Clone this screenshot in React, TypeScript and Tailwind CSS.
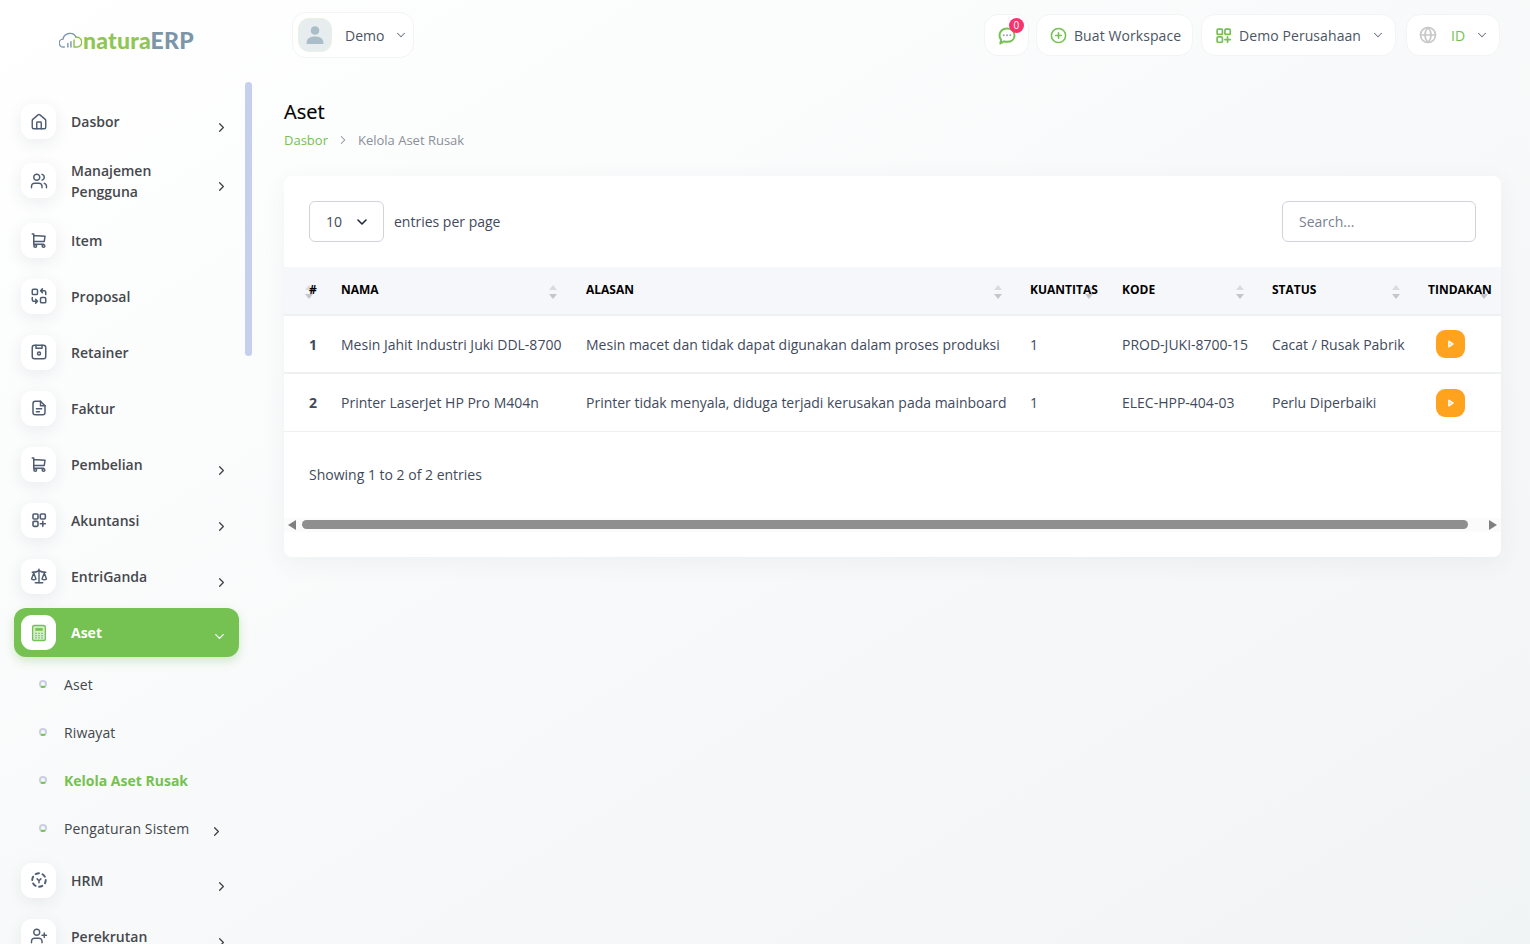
import React from 'react';
import { ChevronDown, ChevronRight, Home, Users, UserPlus, Scale, Globe } from 'lucide-react';

const Ic: React.FC<{ children: React.ReactNode; className?: string }> = ({ children, className }) => (
  <svg viewBox="0 0 24 24" fill="none" stroke="currentColor" strokeWidth={2} strokeLinecap="round" strokeLinejoin="round" className={className ?? 'w-[18px] h-[18px]'}>
    {children}
  </svg>
);

const CartIcon = () => (
  <Ic>
    <circle cx="7" cy="20" r="1.8" />
    <circle cx="18" cy="20" r="1.8" />
    <path d="M5 18V4H3M5 6l15 1-1 7H5M5 17.5h13" />
  </Ic>
);
const SwapIcon = () => (
  <Ic>
    <rect x="3" y="3" width="7" height="7" rx="1.5" />
    <rect x="14" y="14" width="7" height="7" rx="1.5" />
    <path d="M21 10V7a2 2 0 0 0-2-2h-5M16.5 2.5 14 5l2.5 2.5M3 14v3a2 2 0 0 0 2 2h5M7.5 16.5 10 19l-2.500 2.500" />
  </Ic>
);
const SaveIcon = () => (
  <Ic>
    <path d="M6 3h12a3 3 0 0 1 3 3v12a3 3 0 0 1-3 3H6a3 3 0 0 1-3-3V6a3 3 0 0 1 3-3Z" />
    <path d="M8 3v4h8V3" />
    <circle cx="12" cy="14" r="2" />
  </Ic>
);
const FileIcon = () => (
  <Ic>
    <path d="M14 3H7a3 3 0 0 0-3 3v12a3 3 0 0 0 3 3h10a3 3 0 0 0 3-3V9Z" />
    <path d="M14 3v6h6M8.500 13h7M8.500 17h4" />
  </Ic>
);
const GridPlusIcon: React.FC<{ className?: string; strokeWidth?: number }> = ({ className, strokeWidth }) => (
  <Ic className={className}>
    <g strokeWidth={strokeWidth ?? 2}>
      <rect x="3" y="3" width="7.500" height="7.500" rx="1.500" />
      <rect x="14" y="3" width="7.500" height="7.500" rx="1.500" />
      <rect x="3" y="14" width="7.500" height="7.500" rx="1.500" />
      <path d="M17.700 14v7.500M14 17.700h7.500" />
    </g>
  </Ic>
);
const DashedIcon = () => (
  <Ic>
    <circle cx="12" cy="12" r="9" strokeDasharray="4.500 4.900" strokeWidth={2.600} />
    <path d="M9.500 10.500 12 13l2.500-2.500M12 13v2.500" />
  </Ic>
);
const CalcIcon = () => (
  <svg viewBox="0 0 24 24" className="w-[18px] h-[18px]" fill="none" stroke="#75c151" strokeWidth={1.800}>
    <rect x="3.500" y="2" width="17" height="20" rx="2.500" fill="#d6edcb" />
    <rect x="7" y="5.500" width="10" height="3.500" fill="#75c151" stroke="none" />
    <path d="M7 12.500h2M11 12.500h2M15 12.500h2M7 15.500h2M11 15.500h2M15 15.500h2M7 18.500h2M11 18.500h2M15 18.500h2" strokeWidth={1.600} />
  </svg>
);

const SortArrows: React.FC<{ right: string }> = ({ right }) => (
  <span className={`absolute top-[18px] ${right} flex flex-col gap-[4px]`}>
    <span className="w-0 h-0 border-x-[4px] border-x-transparent border-b-[5px] border-b-[#d9dbdf]" />
    <span className="w-0 h-0 border-x-[4px] border-x-transparent border-t-[5px] border-t-[#c4c6cb]" />
  </span>
);

const Th: React.FC<{ label: string; right: string; first?: boolean }> = ({ label, right, first }) => (
  <th className={`relative h-[48px] p-0 pb-[2px] text-left text-[12px] font-bold text-black uppercase whitespace-nowrap ${first ? 'pl-[25px]' : 'pl-[12px]'}`}>
    <SortArrows right={right} />
    <span className="relative z-10">{label}</span>
  </th>
);

type NavItem = { label: React.ReactNode; icon: React.ReactNode; arrow?: boolean; rowClass?: string };

const navTop: NavItem[] = [
  { label: 'Dasbor', icon: <Home className="w-[18px] h-[18px] mt-[1px]" strokeWidth={1.900} />, arrow: true },
  { label: <>Manajemen<br />Pengguna</>, icon: <Users className="w-[18px] h-[18px]" strokeWidth={1.900} />, arrow: true, rowClass: 'h-[63px]' },
  { label: 'Item', icon: <CartIcon /> },
  { label: 'Proposal', icon: <SwapIcon /> },
  { label: 'Retainer', icon: <SaveIcon /> },
  { label: 'Faktur', icon: <FileIcon /> },
  { label: 'Pembelian', icon: <CartIcon />, arrow: true },
  { label: 'Akuntansi', icon: <GridPlusIcon className="w-[16px] h-[16px]" strokeWidth={2.400} />, arrow: true },
  { label: 'EntriGanda', icon: <Scale className="w-[18px] h-[18px]" strokeWidth={1.900} />, arrow: true },
];

const IconBox: React.FC<{ children: React.ReactNode }> = ({ children }) => (
  <span className="w-[35px] h-[35px] shrink-0 rounded-[11px] bg-white flex items-center justify-center text-[#4f5d73] shadow-[0_4px_16px_rgba(60,70,90,0.09)]">
    {children}
  </span>
);

const NavRow: React.FC<NavItem> = ({ label, icon, arrow, rowClass }) => (
  <div className={`flex items-center pl-[21px] pr-[24px] ${rowClass ?? 'h-[56px]'}`}>
    <IconBox>{icon}</IconBox>
    <span className="ml-[15px] flex-1 text-[14px] leading-[21px] font-semibold text-[#45484c]">{label}</span>
    {arrow && <ChevronRight className="w-[15px] h-[15px] mt-[12px] text-[#3f4246] -mr-[1px]" strokeWidth={2} />}
  </div>
);

const SubRow: React.FC<{ label: string; active?: boolean; arrow?: boolean }> = ({ label, active, arrow }) => (
  <div className="flex items-center h-[48px] pl-[39px] pr-[29px]">
    <span className="w-[8px] h-[8px] rounded-full border-2 border-[#c9cfe0] border-b-[#75c151]" />
    <span className={`ml-[17px] flex-1 text-[14px] ${active ? 'font-bold text-[#75c151]' : 'font-medium tracking-[0.12px] text-[#44474c]'}`}>{label}</span>
    {arrow && <ChevronRight className="w-[15px] h-[15px] mt-[6px] text-[#3f4246] -mr-[1px]" strokeWidth={2} />}
  </div>
);

const Sidebar = () => (
  <aside className="relative w-[284px] shrink-0 h-[944px] overflow-hidden">
    <div className="h-[93px] flex items-start pl-[59px] pt-[26px]">
      <svg viewBox="0 0 26 20" className="w-[23px] h-[18px] mt-[5px] mr-[1px]" fill="none" strokeWidth={1.600} strokeLinecap="round">
        <path d="M6 18H5a4.500 4.500 0 0 1-.5-9A8 8 0 0 1 19.500 7" stroke="#7c96a8" />
        <path d="M10 18v-4M13.500 18v-6" stroke="#7c96a8" />
        <path d="M19.500 7a5.500 5.500 0 0 1 1.500 11h-4V10" stroke="#8bc34a" />
      </svg>
      <span className="font-['Lato',sans-serif] text-[23px] leading-[28px] font-black tracking-[0.2px]">
        <span className="text-[#8fc655]">natura</span>
        <span className="text-[#7c96a8]">ERP</span>
      </span>
    </div>
    <nav className="w-[252px]">
      {navTop.map((n, i) => <NavRow key={i} {...n} />)}
      <div className="mx-[13px] ml-[14px] mt-[4px] h-[49px] rounded-[12px] bg-[#75c151] shadow-[0_4px_10px_rgba(117,193,81,0.3)] flex items-center pl-[7px] pr-[12px]">
        <span className="w-[35px] h-[35px] rounded-[11px] bg-white flex items-center justify-center"><CalcIcon /></span>
        <span className="ml-[15px] flex-1 text-[14px] font-bold text-white">Aset</span>
        <ChevronDown className="w-[15px] h-[15px] mt-[7px] text-white" strokeWidth={2} />
      </div>
      <div className="mt-[3px]">
        <SubRow label="Aset" />
        <SubRow label="Riwayat" />
        <SubRow label="Kelola Aset Rusak" active />
        <SubRow label="Pengaturan Sistem" arrow />
      </div>
      <NavRow label="HRM" icon={<DashedIcon />} arrow />
      <NavRow label="Perekrutan" icon={<UserPlus className="w-[18px] h-[18px]" strokeWidth={1.900} />} arrow />
    </nav>
    <div className="absolute left-[245px] top-[82px] w-[7px] h-[274px] rounded-full bg-[#c5cfee]" />
  </aside>
);

const Pill: React.FC<{ className: string; children: React.ReactNode }> = ({ className, children }) => (
  <div className={`h-[42px] rounded-[14px] bg-white border border-[#f3f4f5] flex items-center text-[14px] font-medium tracking-[0.08px] text-[#4b5563] ${className}`}>
    {children}
  </div>
);

const Header = () => (
  <header className="flex items-start justify-between pt-[12px] pl-[8px] pr-[30px] h-[94px]">
    <div className="w-[122px] h-[46px] rounded-[14px] bg-white border border-[#f3f4f5] flex items-center pl-[5px] text-[14px] font-medium text-[#4b5563]">
      <span className="w-[34px] h-[34px] rounded-[11px] bg-[#e7edee] border border-[#e6f3e0] flex items-center justify-center">
        <svg viewBox="0 0 24 24" className="w-[24px] h-[24px]" fill="#a9bec8">
          <circle cx="12" cy="7.500" r="4.300" />
          <path d="M3.500 20c0-4.500 3.800-6.500 8.500-6.500s8.500 2 8.500 6.500c0 .6-.4 1-1 1h-15c-.6 0-1-.4-1-1Z" />
        </svg>
      </span>
      <span className="ml-[13px]">Demo</span>
      <ChevronDown className="w-[14px] h-[14px] ml-[10px] text-[#6b7280]" strokeWidth={1.800} />
    </div>
    <div className="flex items-center mt-[2px]">
      <Pill className="relative w-[45px] justify-center">
        <svg viewBox="0 0 24 24" className="w-[20px] h-[20px] mt-[1px]" fill="none" stroke="#75c151" strokeWidth={2.400} strokeLinecap="round" strokeLinejoin="round">
          <path d="M12 3c5.500 0 9 3.500 9 8s-3.500 8-9 8c-1.300 0-2.500-.2-3.500-.6L4 21l.9-4.300C3.700 15.200 3 13.200 3 11c0-4.500 3.500-8 9-8Z" />
          <path d="M8 11h.01M12 11h.01M16 11h.01" stroke="#9aa3af" />
        </svg>
        <span className="absolute top-[3px] right-[4px] w-[15px] h-[15px] rounded-full bg-[#f8346e] text-white text-[10px] font-normal leading-[15px] text-center">0</span>
      </Pill>
      <Pill className="w-[157px] ml-[7px] pl-[13px]">
        <svg viewBox="0 0 24 24" className="w-[17px] h-[17px]" fill="none" stroke="#75c151" strokeWidth={2.200} strokeLinecap="round">
          <circle cx="12" cy="12" r="10" />
          <path d="M12 8v8M8 12h8" />
        </svg>
        <span className="ml-[7px]">Buat Workspace</span>
      </Pill>
      <Pill className="w-[195px] ml-[8px] pl-[13px]">
        <span className="text-[#75c151]"><GridPlusIcon className="w-[17px] h-[17px]" strokeWidth={2.400} /></span>
        <span className="ml-[7px]">Demo Perusahaan</span>
        <ChevronDown className="w-[14px] h-[14px] ml-[10px] text-[#6b7280]" strokeWidth={1.800} />
      </Pill>
      <Pill className="w-[94px] ml-[10px] pl-[12px]">
        <Globe className="w-[18px] h-[18px] text-[#c8c8c8]" strokeWidth={2.200} />
        <span className="ml-[14px] text-[#75c151] font-normal">ID</span>
        <ChevronDown className="w-[14px] h-[14px] ml-[10px] text-[#6b7280]" strokeWidth={1.800} />
      </Pill>
    </div>
  </header>
);

const rows = [
  { no: 1, nama: 'Mesin Jahit Industri Juki DDL-8700', alasan: 'Mesin macet dan tidak dapat digunakan dalam proses produksi', qty: 1, kode: 'PROD-JUKI-8700-15', status: 'Cacat / Rusak Pabrik' },
  { no: 2, nama: 'Printer LaserJet HP Pro M404n', alasan: 'Printer tidak menyala, diduga terjadi kerusakan pada mainboard', qty: 1, kode: 'ELEC-HPP-404-03', status: 'Perlu Diperbaiki' },
];

const Table = () => (
  <div className="overflow-hidden mt-[25px]">
    <table className="table-fixed border-collapse w-[1221px]">
      <colgroup>
        <col className="w-[45px]" />
        <col className="w-[245px]" />
        <col className="w-[444px]" />
        <col className="w-[92px]" />
        <col className="w-[150px]" />
        <col className="w-[156px]" />
        <col className="w-[89px]" />
      </colgroup>
      <thead>
        <tr className="bg-[#f6f7fb] border-b-2 border-[#eff0f2]">
          <Th label="#" right="right-[16px]" first />
          <Th label="Nama" right="right-[17px]" />
          <Th label="Alasan" right="right-[16px]" />
          <Th label="Kuantitas" right="right-[17px]" />
          <Th label="Kode" right="right-[16px]" />
          <Th label="Status" right="right-[16px]" />
          <Th label="Tindakan" right="right-[17px]" />
        </tr>
      </thead>
      <tbody className="text-[14px] text-[#3f4a5c]">
        {rows.map((r) => (
          <tr key={r.no} className={`h-[58px] border-[#eff0f2] ${r.no === 1 ? 'border-b-2' : 'border-b'}`}>
            <td className="p-0 pl-[25px] font-bold">{r.no}</td>
            <td className="p-0 pl-[12px] whitespace-nowrap">{r.nama}</td>
            <td className="p-0 pl-[12px] whitespace-nowrap">{r.alasan}</td>
            <td className="p-0 pl-[12px]">{r.qty}</td>
            <td className="p-0 pl-[12px] whitespace-nowrap">{r.kode}</td>
            <td className="p-0 pl-[12px] whitespace-nowrap">{r.status}</td>
            <td className="p-0 pl-[20px]">
              <button className={`w-[29px] h-[28px] rounded-[9px] bg-[#ffa31f] flex items-center justify-center ${r.no === 2 ? 'mt-[1px]' : ''}`}>
                <svg viewBox="0 0 8 10" className="w-[6px] h-[8px]" fill="#ffd9a0" stroke="#ffffff" strokeWidth={1.500} strokeLinejoin="round">
                  <path d="M1 1l6 4-6 4Z" />
                </svg>
              </button>
            </td>
          </tr>
        ))}
      </tbody>
    </table>
  </div>
);

const App: React.FC = () => {
  return (
    <div className="flex w-[1530px] h-[944px] overflow-hidden bg-gradient-to-br from-white to-[#f1f4f5] font-['Open_Sans',sans-serif]">
      <Sidebar />
      <main className="flex-1 min-w-0">
        <Header />
        <div className="pr-[29px]">
          <h1 className="text-[20px] leading-[28px] font-normal text-black mt-[4px] [-webkit-text-stroke:0.2px_black]">Aset</h1>
          <div className="flex items-center mt-[5px] text-[13px] leading-[18px]">
            <span className="text-[#75c151]">Dasbor</span>
            <ChevronRight className="w-[14px] h-[14px] mx-[8px] text-[#8a8f98]" strokeWidth={1.800} />
            <span className="text-[#8a8f98]">Kelola Aset Rusak</span>
          </div>
          <section className="mt-[27px] w-[1217px] h-[381px] rounded-[8px] bg-white shadow-[0_6px_24px_rgba(60,70,90,0.06)] overflow-hidden">
            <div className="flex items-center justify-between pt-[25px] pl-[25px] pr-[25px]">
              <div className="flex items-center text-[14px] text-[#3f4a5c]">
                <div className="w-[75px] h-[41px] rounded-[6px] border border-[#d0d3da] flex items-center pl-[16px]">
                  10
                  <ChevronDown className="w-[16px] h-[16px] ml-[12px] text-[#1f2937]" strokeWidth={2.400} />
                </div>
                <span className="ml-[10px]">entries per page</span>
              </div>
              <div className="w-[194px] h-[41px] rounded-[6px] border border-[#d0d3da] flex items-center pl-[16px] text-[14px] text-[#7b8290]">
                Search...
              </div>
            </div>
            <Table />
            <div className="pl-[25px] mt-[33px] text-[14px] leading-[20px] text-[#3f4a5c]">Showing 1 to 2 of 2 entries</div>
            <div className="mt-[33px] h-[14px] flex items-center bg-[#fbfbfb]">
              <span className="ml-[4px] w-0 h-0 border-y-[5px] border-y-transparent border-r-[8px] border-r-[#7f7f7f]" />
              <span className="ml-[6px] w-[1166px] h-[9px] rounded-full bg-[#8f8f8f]" />
              <span className="ml-[21px] w-0 h-0 border-y-[5px] border-y-transparent border-l-[8px] border-l-[#7f7f7f]" />
            </div>
          </section>
        </div>
      </main>
    </div>
  );
};

export default App;
